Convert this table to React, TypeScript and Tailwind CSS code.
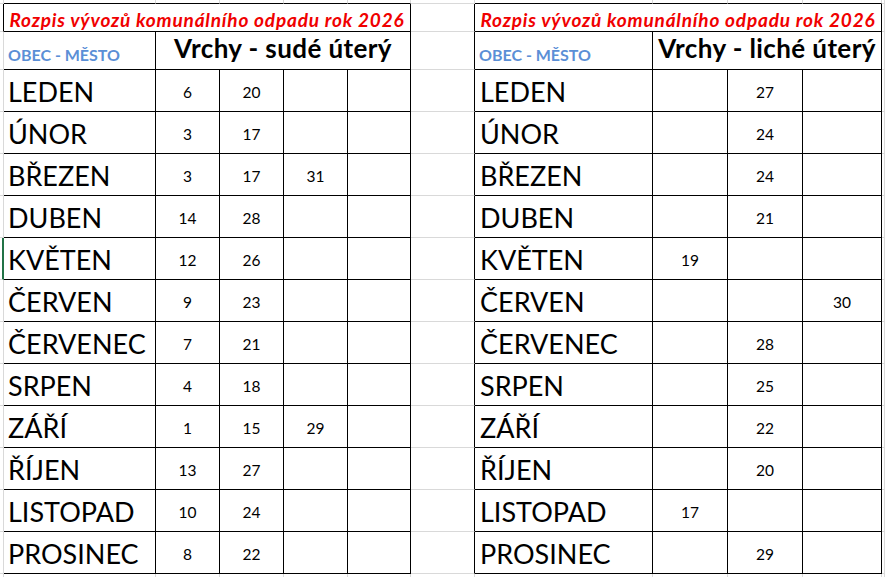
import clsx from "clsx";

type Row = { month: string; left: (number | null)[]; right: (number | null)[] };

const rows: Row[] = [
  { month: "LEDEN", left: [6, 20, null], right: [null, 27, null] },
  { month: "ÚNOR", left: [3, 17, null], right: [null, 24, null] },
  { month: "BŘEZEN", left: [3, 17, 31], right: [null, 24, null] },
  { month: "DUBEN", left: [14, 28, null], right: [null, 21, null] },
  { month: "KVĚTEN", left: [12, 26, null], right: [19, null, null] },
  { month: "ČERVEN", left: [9, 23, null], right: [null, null, 30] },
  { month: "ČERVENEC", left: [7, 21, null], right: [null, 28, null] },
  { month: "SRPEN", left: [4, 18, null], right: [null, 25, null] },
  { month: "ZÁŘÍ", left: [1, 15, 29], right: [null, 22, null] },
  { month: "ŘÍJEN", left: [13, 27, null], right: [null, 20, null] },
  { month: "LISTOPAD", left: [10, 24, null], right: [17, null, null] },
  { month: "PROSINEC", left: [8, 22, null], right: [null, 29, null] },
];

const TITLE = "Rozpis vývozů komunálního odpadu rok 2026";

function Cell({
  r = "gray",
  b = "gray",
  className,
  children,
}: {
  r?: "black" | "gray" | "green";
  b?: "black" | "gray" | "none";
  className?: string;
  children?: React.ReactNode;
}) {
  return (
    <div
      className={clsx(
        "min-w-0 overflow-visible whitespace-nowrap",
        r === "black" && "border-r border-r-black",
        r === "gray" && "border-r border-r-[#d9d9d9]",
        r === "green" && "border-r-2 border-r-[#217346]",
        b === "black" && "border-b border-b-black",
        b === "gray" && "border-b border-b-[#d9d9d9]",
        className,
      )}
    >
      {children}
    </div>
  );
}

function Num({ value }: { value: number | null }) {
  return (
    <Cell r="black" b="black" className="flex items-center justify-center pt-[4px] text-[15.5px] leading-none text-black">
      {value ?? ""}
    </Cell>
  );
}

export default function App() {
  return (
    <div className="h-[577px] w-[885px] overflow-hidden bg-white font-['Lato',sans-serif]">
      <div className="grid grid-cols-[4px_152px_64px_64px_64px_63px_64px_178px_75px_75px_79px_3px] grid-rows-[4px_28px_38px_repeat(12,42px)_3px]">
        {/* spare row above the tables */}
        <Cell />
        <Cell b="black" />
        <Cell b="black" />
        <Cell b="black" />
        <Cell b="black" />
        <Cell b="black" />
        <Cell />
        <Cell b="black" />
        <Cell b="black" />
        <Cell b="black" />
        <Cell b="black" />
        <Cell />

        {/* title row */}
        <Cell r="black" />
        <Cell r="black" b="black" className="col-span-5 flex items-center justify-center pt-[3px] text-[19px] font-bold italic leading-none tracking-[0.8px] text-[#f00000]">
          {TITLE}
        </Cell>
        <Cell r="black" />
        <Cell r="black" b="black" className="col-span-4 flex items-center justify-center pt-[3px] text-[19px] font-bold italic leading-none tracking-[0.8px] text-[#f00000]">
          {TITLE}
        </Cell>
        <Cell />

        {/* header row */}
        <Cell />
        <Cell r="black" b="black" className="flex items-end pb-[6px] pl-[4px] text-[16px] font-bold leading-none text-[#5b8fd6]">
          OBEC - MĚSTO
        </Cell>
        <Cell r="black" b="black" className="col-span-4 flex items-end justify-center pb-[8px] text-[26px] font-bold leading-none tracking-[0.4px] text-black">
          Vrchy - sudé úterý
        </Cell>
        <Cell r="black" />
        <Cell r="black" b="black" className="flex items-end pb-[6px] pl-[4px] text-[16px] font-bold leading-none text-[#5b8fd6]">
          OBEC - MĚSTO
        </Cell>
        <Cell r="black" b="black" className="col-span-3 flex items-end justify-center pb-[8px] text-[26px] font-bold leading-none tracking-[0.4px] text-black">
          Vrchy - liché úterý
        </Cell>
        <Cell />

        {rows.map((row) => (
          <div key={row.month} className="contents">
            <Cell r={row.month === "KVĚTEN" ? "green" : "gray"} />
            <Cell r="black" b="black" className="flex items-end pb-[6px] pl-[4px] text-[27px] leading-none text-black">
              {row.month}
            </Cell>
            {row.left.map((v, i) => (
              <Num key={i} value={v} />
            ))}
            <Cell r="black" b="black" />
            <Cell r="black" />
            <Cell r="black" b="black" className="flex items-end pb-[6px] pl-[5px] text-[27px] leading-none text-black">
              {row.month}
            </Cell>
            {row.right.map((v, i) => (
              <Num key={i} value={v} />
            ))}
            <Cell />
          </div>
        ))}

        {/* spare row below */}
        <Cell b="none" />
        <Cell b="none" />
        <Cell b="none" />
        <Cell b="none" />
        <Cell b="none" />
        <Cell b="none" />
        <Cell b="none" />
        <Cell b="none" />
        <Cell b="none" />
        <Cell b="none" />
        <Cell b="none" />
        <Cell b="none" />
      </div>
    </div>
  );
}
